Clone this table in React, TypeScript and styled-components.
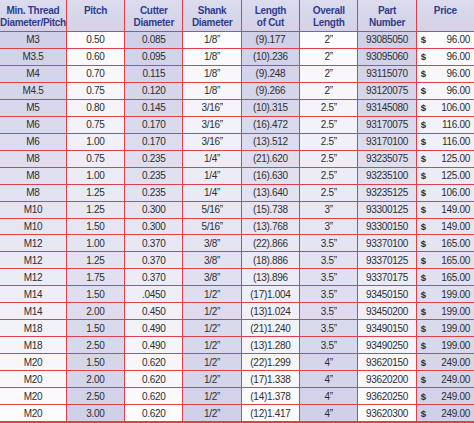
import React from "react";
import styled, { createGlobalStyle } from "styled-components";

const GlobalStyle = createGlobalStyle`
  html, body {
    margin: 0;
    padding: 0;
    background: #ffffff;
  }
  body {
    font-family: "Liberation Sans", Arial, sans-serif;
  }
`;

const LAVENDER = [208, 208, 232];
const WHITE = [252, 252, 254];

const mix = (t: number) => {
  const c = LAVENDER.map((v, i) => Math.round(v + (WHITE[i] - v) * t));
  return `rgb(${c[0]}, ${c[1]}, ${c[2]})`;
};

const Table = styled.div`
  width: 474px;
  height: 423px;
  display: grid;
  grid-template-columns: repeat(8, 1fr);
  grid-template-rows: 31px repeat(23, 1fr);
  gap: 1px;
  background: #e0404a;
  padding-bottom: 2px;
  box-sizing: border-box;
  overflow: hidden;
`;

const HeadCell = styled.div`
  background: linear-gradient(180deg, #dcdcee 0%, #d2d2e8 100%);
  color: #2f3d8f;
  font-family: "Liberation Sans Narrow", "Liberation Sans", Arial, sans-serif;
  font-weight: bold;
  font-size: 10px;
  line-height: 12px;
  text-align: center;
  padding-top: 5px;
  letter-spacing: -0.3px;
`;

const Cell = styled.div<{ $bg: string }>`
  background: ${(p) => p.$bg};
  color: #2e2e2e;
  font-size: 10px;
  display: flex;
  align-items: center;
  justify-content: center;
  letter-spacing: -0.3px;
  white-space: nowrap;
`;

const PriceCell = styled(Cell)`
  justify-content: space-between;
  padding: 0 4px 0 4px;
`;

const Dollar = styled.span`
  font-weight: bold;
  font-size: 9.5px;
`;

const headers = [
  ["Min. Thread", "Diameter/Pitch"],
  ["Pitch"],
  ["Cutter", "Diameter"],
  ["Shank", "Diameter"],
  ["Length", "of Cut"],
  ["Overall", "Length"],
  ["Part", "Number"],
  ["Price"],
];

const rows: string[][] = [
  ["M3", "0.50", "0.085", "1/8\u201d", "(9).177", "2\u201d", "93085050", "96.00"],
  ["M3.5", "0.60", "0.095", "1/8\u201d", "(10).236", "2\u201d", "93095060", "96.00"],
  ["M4", "0.70", "0.115", "1/8\u201d", "(9).248", "2\u201d", "93115070", "96.00"],
  ["M4.5", "0.75", "0.120", "1/8\u201d", "(9).266", "2\u201d", "93120075", "96.00"],
  ["M5", "0.80", "0.145", "3/16\u201d", "(10).315", "2.5\u201d", "93145080", "106.00"],
  ["M6", "0.75", "0.170", "3/16\u201d", "(16).472", "2.5\u201d", "93170075", "116.00"],
  ["M6", "1.00", "0.170", "3/16\u201d", "(13).512", "2.5\u201d", "93170100", "116.00"],
  ["M8", "0.75", "0.235", "1/4\u201d", "(21).620", "2.5\u201d", "93235075", "125.00"],
  ["M8", "1.00", "0.235", "1/4\u201d", "(16).630", "2.5\u201d", "93235100", "125.00"],
  ["M8", "1.25", "0.235", "1/4\u201d", "(13).640", "2.5\u201d", "93235125", "106.00"],
  ["M10", "1.25", "0.300", "5/16\u201d", "(15).738", "3\u201d", "93300125", "149.00"],
  ["M10", "1.50", "0.300", "5/16\u201d", "(13).768", "3\u201d", "93300150", "149.00"],
  ["M12", "1.00", "0.370", "3/8\u201d", "(22).866", "3.5\u201d", "93370100", "165.00"],
  ["M12", "1.25", "0.370", "3/8\u201d", "(18).886", "3.5\u201d", "93370125", "165.00"],
  ["M12", "1.75", "0.370", "3/8\u201d", "(13).896", "3.5\u201d", "93370175", "165.00"],
  ["M14", "1.50", ".0450", "1/2\u201d", "(17)1.004", "3.5\u201d", "93450150", "199.00"],
  ["M14", "2.00", "0.450", "1/2\u201d", "(13)1.024", "3.5\u201d", "93450200", "199.00"],
  ["M18", "1.50", "0.490", "1/2\u201d", "(21)1.240", "3.5\u201d", "93490150", "199.00"],
  ["M18", "2.50", "0.490", "1/2\u201d", "(13)1.280", "3.5\u201d", "93490250", "199.00"],
  ["M20", "1.50", "0.620", "1/2\u201d", "(22)1.299", "4\u201d", "93620150", "249.00"],
  ["M20", "2.00", "0.620", "1/2\u201d", "(17)1.338", "4\u201d", "93620200", "249.00"],
  ["M20", "2.50", "0.620", "1/2\u201d", "(14)1.378", "4\u201d", "93620250", "249.00"],
  ["M20", "3.00", "0.620", "1/2\u201d", "(12)1.417", "4\u201d", "93620300", "249.00"],
];

// odd columns fade lavender -> white going down, even columns the other way
const shade = (row: number, col: number) => {
  const t = row / (rows.length - 1);
  return col % 2 === 0 ? mix(t) : mix(1 - t);
};

export default function App() {
  return (
    <>
      <GlobalStyle />
      <Table>
        {headers.map((h, i) => (
          <HeadCell key={`h${i}`}>
            {h.map((line) => (
              <div key={line}>{line}</div>
            ))}
          </HeadCell>
        ))}
        {rows.map((r, ri) =>
          r.map((v, ci) =>
            ci === 7 ? (
              <PriceCell key={`${ri}-${ci}`} $bg={shade(ri, ci)}>
                <Dollar>$</Dollar>
                <span>{v}</span>
              </PriceCell>
            ) : (
              <Cell key={`${ri}-${ci}`} $bg={shade(ri, ci)}>
                {v}
              </Cell>
            )
          )
        )}
      </Table>
    </>
  );
}
